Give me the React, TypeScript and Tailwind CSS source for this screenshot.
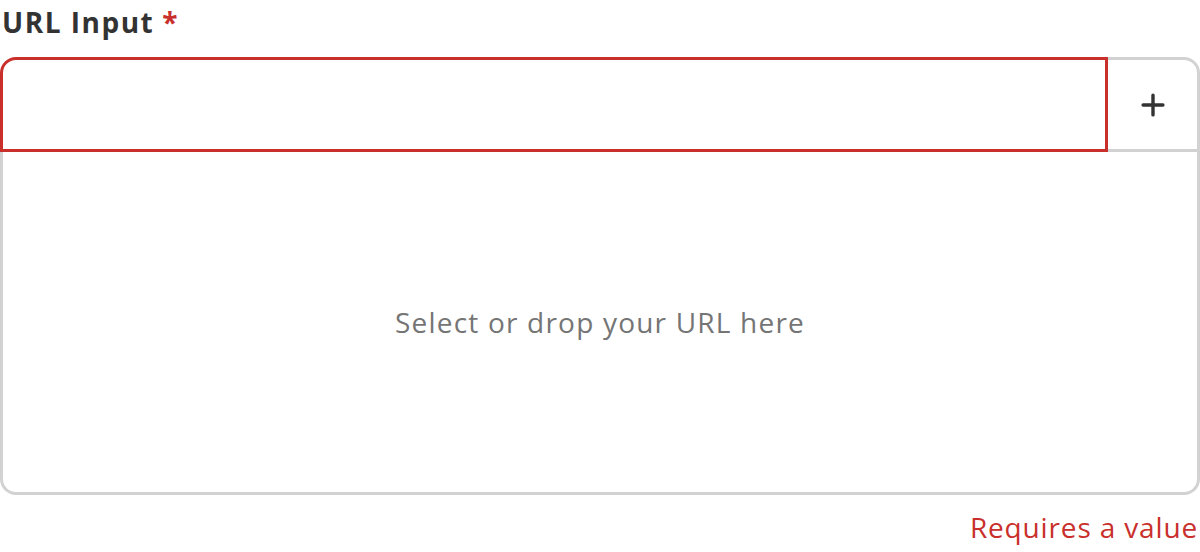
import { Plus } from "lucide-react";

export default function App() {
  return (
    <div className="w-[1200px] bg-white font-['Open_Sans',sans-serif]">
      {/* Label */}
      <div className="flex h-[57px] items-start pt-[3px] pl-[2px]">
        <span className="text-[28px] font-bold leading-[38px] tracking-[1.5px] text-[#333]">
          URL Input
        </span>
        <span className="ml-[8px] text-[28px] font-bold leading-[38px] text-[#c9302c]">
          *
        </span>
      </div>

      {/* Field */}
      <div className="flex flex-col">
        <div className="flex h-[95px]">
          <input
            className="h-full w-[1108px] rounded-tl-[16px] border-[3px] border-[#c9302c] bg-white px-4 text-[26px] outline-none"
            aria-invalid="true"
          />
          <button className="flex flex-1 items-center justify-center rounded-tr-[16px] border-y-[3px] border-r-[3px] border-[#d2d2d2] bg-white text-[#333]">
            <Plus size={34} strokeWidth={2.4} />
          </button>
        </div>
        <div className="flex h-[343px] items-center justify-center rounded-b-[16px] border-x-[3px] border-b-[3px] border-[#d2d2d2]">
          <span className="text-[28px] tracking-[1.2px] text-[#757575]">
            Select or drop your URL here
          </span>
        </div>
      </div>

      {/* Error */}
      <div className="flex justify-end pt-[12px] pr-[2px]">
        <span className="text-[28px] leading-[40px] tracking-[0.85px] text-[#c9302c]">
          Requires a value
        </span>
      </div>
    </div>
  );
}
